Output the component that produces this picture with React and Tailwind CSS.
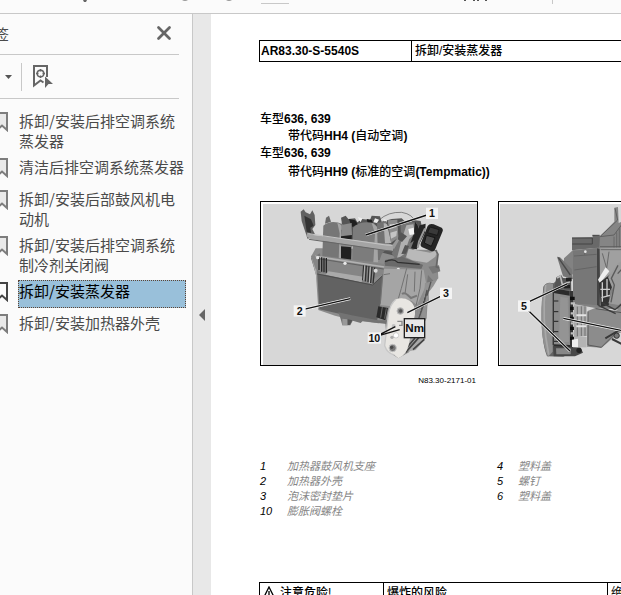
import { X } from "lucide-react";

const bookmarks = [
  { id: 1, title: "拆卸/安装后排空调系统蒸发器" },
  { id: 2, title: "清洁后排空调系统蒸发器" },
  { id: 3, title: "拆卸/安装后部鼓风机电动机" },
  { id: 4, title: "拆卸/安装后排空调系统制冷剂关闭阀" },
  { id: 5, title: "拆卸/安装蒸发器", selected: true },
  { id: 6, title: "拆卸/安装加热器外壳" },
];

const legendLeft = [
  ["1", "加热器鼓风机支座"],
  ["2", "加热器外壳"],
  ["3", "泡沫密封垫片"],
  ["10", "膨胀阀螺栓"],
];

const legendRight = [
  ["4", "塑料盖"],
  ["5", "螺钉"],
  ["6", "塑料盖"],
];

function BookmarkIcon({ selected }) {
  return (
    <svg width="12" height="20" viewBox="0 0 12 20" className="shrink-0" aria-hidden="true">
      <path d="M1 1H11V18L6 13.500L1 18Z" fill={selected ? "#fbfbfb" : "#e9e9e9"} stroke={selected ? "#444" : "#7d7d7d"} strokeWidth="2" />
    </svg>
  );
}

function FindBookmarkIcon() {
  return (
    <svg width="20" height="23" viewBox="0 0 20 23" fill="none" stroke="#666" aria-hidden="true">
      <path d="M10.500 17.500L7.500 15.500L1 20.500V1H14V12" strokeWidth="2" />
      <circle cx="7.500" cy="8.500" r="3.300" strokeWidth="1.500" />
      <path d="M7.500 4V6.500M7.500 10.500V13M3 8.500H5.500M9.500 8.500H12" strokeWidth="1.500" />
      <path d="M12 11.500L20 19L15.500 19L12 23Z" fill="#666" stroke="none" />
    </svg>
  );
}

function Callout({ x, y, w = 36, children }) {
  return (
    <>
      <rect x={x - w / 2} y={y - 17} width={w} height="34" fill="#f4f4f4" />
      <text x={x} y={y + 11} textAnchor="middle" fontSize="32" fontWeight="bold" fill="#111">{children}</text>
    </>
  );
}

// Heater housing, front view
function HousingDrawing() {
  return (
    <svg width="214" height="161" viewBox="24 27 642 483" preserveAspectRatio="none" role="img" aria-label="N83.30-2171-01">
      <rect x="24" y="27" width="642" height="483" fill="#d7d7d7" />

      {/* hose and rear parts */}
      <path d="M372 75Q400 50 440 52Q475 58 480 82" fill="none" stroke="#555" strokeWidth="2" />
      <path d="M168 185L182 160L200 160L545 165L550 250L520 285L515 370L462 472L430 490L400 470L390 380L370 385L292 375L240 362L190 345L183 240Z" fill="#8c8c8c" />
      <path d="M168 190L195 175L200 232L184 240Z" fill="#747474" />
      <path d="M183 180L170 190L185 250L192 345L186 260Z" fill="#aaa" />

      {/* bracket arm on the left */}
      <path d="M137 50L146 43L152 52L165 58L172 46L179 60L181 90L172 102L180 118L158 132L140 78Z" fill="#616161" />
      <path d="M148 62L168 73L176 92L166 98L168 114L155 110Z" fill="#333" />

      {/* top mechanism */}
      <path d="M260 80L258 68L272 62L280 72L300 70L307 82L322 72L345 75L350 62L375 64L380 80L410 72L440 70L458 88L475 75L497 78L500 92L485 160L430 185L290 150L262 110Z" fill="#555" />
      <path d="M282 72L300 76L310 90L290 96ZM335 72L350 74L356 90L340 92Z" fill="#1f1f1f" />
      <path d="M308 66L322 70L317 82ZM360 70L372 74L366 84L355 82ZM385 72L396 76L392 88Z" fill="#ededed" />
      <path d="M213 68L222 62L228 80L210 86Z" fill="#686868" />

      {/* blower halves */}
      <path d="M205 92Q228 72 264 88L257 192L202 184Z" fill="#767676" />
      <path d="M247 83Q264 89 266 110L262 195L251 193L254 115Z" fill="#a6a6a6" />
      <path d="M258 105L291 94L288 203L258 196Z" fill="#202020" />
      <path d="M259 90L290 84L291 120L258 124Z" fill="#8a8a8a" />
      <path d="M256 140L292 145L291 157L257 154Z" fill="#8b8b8b" />
      <path d="M294 98Q315 76 357 84L363 105L357 200L292 200Z" fill="#7c7c7c" />
      <path d="M350 84Q370 91 373 112L369 202L355 202L360 116Z" fill="#a5a5a5" />
      <path d="M366 84L393 78L404 150L380 178L374 195L369 195Z" fill="#727272" />
      <path d="M386 85Q399 84 398 96L409 144L390 145Z" fill="#b3b3b3" />
      <path d="M398 76L427 74L430 128L408 143Z" fill="#8c8c8c" />
      <path d="M404 88L425 86L424 96L404 103ZM406 113L426 107L424 123L408 131Z" fill="#c4c4c4" />

      {/* main crossbar */}
      <path d="M157 113L174 120L390 146L407 148L418 154L414 168L390 166L166 132L154 124Z" fill="#a4a4a4" />
      <path d="M160 116L392 150L414 151" fill="none" stroke="#c5c5c5" strokeWidth="3" />
      <path d="M162 133L390 166L413 169" fill="none" stroke="#666" strokeWidth="3" />
      <path d="M412 150L428 128L436 134L418 166Z" fill="#999" />

      {/* right linkage and gears */}
      <path d="M436 78L484 83L496 105L464 180L427 202L410 175L438 125Z" fill="#757575" />
      <path d="M454 91L475 88L480 114L463 132L447 178L425 193L440 135Z" fill="#b0b0b0" />
      <path d="M480 80Q498 97 488 128L466 145L476 118Z" fill="#252525" />
      <path d="M460 102L476 98L478 118L464 120Z" fill="#f4f4f4" />
      <path d="M438 112L428 133L441 141L456 124ZM450 150L462 153L453 176L439 177Z" fill="#555" />
      <path d="M494 91L512 86L510 113L485 163L468 160Z" fill="#252525" />
      <path d="M518 93Q524 84 536 88L560 98Q566 103 562 111L541 162Q537 173 526 167L502 157Q494 152 498 143Z" fill="#242424" />
      <path d="M525 96L552 104L547 121L518 113Z" fill="#393939" stroke="#111" strokeWidth="2" />
      <path d="M514 121L540 128L529 154L508 144Z" fill="#4a4a4a" stroke="#151515" strokeWidth="3" />
      <path d="M510 100L492 140L488 158" fill="none" stroke="#999" strokeWidth="6" />

      {/* right shelf and side */}
      <path d="M461 161L525 173L548 165L541 185L516 203L472 196L453 187Z" fill="#b9b9b9" />
      <path d="M390 195L440 185L490 204L510 212L505 222L388 212Z" fill="#6a6a6a" />
      <path d="M390 200Q415 188 428 202L494 208" fill="none" stroke="#303030" strokeWidth="4" />
      <path d="M505 208L540 195L545 250L513 270L512 370L475 350L466 300Z" fill="#8c8c8c" />
      <path d="M520 215L552 211L556 229L533 236ZM519 240L535 257L528 277L515 271Z" fill="#777" />
      <path d="M542 165L549 178L544 215L552 219" fill="none" stroke="#666" strokeWidth="5" />

      {/* rail below blower */}
      <path d="M168 182L214 184L390 207L387 237L352 252L343 268L205 235L182 222Z" fill="#858585" />
      <path d="M182 184L388 216" stroke="#b2b2b2" strokeWidth="5" />
      <path d="M183 190L386 222" stroke="#505050" strokeWidth="2" />
      <path d="M220 229L325 245L320 262L212 239Z" fill="#aaa" />
      <path d="M192 186V225M200 187V230M207 188V232M214 189V233" stroke="#242424" strokeWidth="4" />
      <path d="M326 211L323 256M334 212L331 259M342 214L339 262M351 216L347 264M359 218L354 266" stroke="#303030" strokeWidth="4" />
      <path d="M329 211L326 256M346 215L343 264" stroke="#d2d2d2" strokeWidth="2" />
      <circle cx="188" cy="188" r="5" fill="#e5e5e5" />
      <circle cx="270" cy="205" r="5" fill="#e9e9e9" />
      <circle cx="362" cy="227" r="6" fill="#d9d9d9" />
      <circle cx="430" cy="223" r="5" fill="#e9e9e9" />

      {/* housing body */}
      <path d="M187 237L211 240L353 269L383 241L376 325L366 379L283 363L193 343Z" fill="#626262" />
      <path d="M187 237L353 270L383 242" fill="none" stroke="#4c4c4c" strokeWidth="3" />
      <path d="M387 221L506 224L514 270L486 330L470 318L446 311L423 315L407 334L377 330Z" fill="#a5a5a5" />
      <path d="M383 238L376 326M386 239L405 236M455 220L439 280L430 311M458 238L450 296M480 230L478 290M500 226L495 280L483 332" fill="none" stroke="#727272" strokeWidth="3" />
      <path d="M441 297Q448 292 458 300L468 309L486 302" fill="none" stroke="#777" strokeWidth="6" />
      <path d="M370 334L399 339L391 376L364 367Z" fill="#292929" />
      <path d="M382 336L377 368M394 340L389 371" stroke="#8a8a8a" strokeWidth="2" />
      <path d="M250 352L290 361L370 376L396 376L395 387L362 383L323 378L317 384L293 377L286 391L262 391L257 372Z" fill="#737373" />
      <path d="M262 371L277 373L278 391L262 391Z" fill="#999" />
      <path d="M278 373L292 376L284 390L278 390Z" fill="#555" />
      <path d="M510 264L546 255L535 274L521 292L522 316L513 340L512 369L500 372Z" fill="#929292" />
      <path d="M516 285L508 323L491 371M528 260L516 302" stroke="#565656" strokeWidth="4" />

      {/* expansion valve flange */}
      <path d="M462 425L513 430L482 465L455 470Z" fill="#a8a8a8" />
      <path d="M492 427L452 472M480 429L456 457M508 433L474 464" stroke="#444" strokeWidth="5" />
      <path d="M423 313Q443 305 464 317Q482 329 480 358L461 450Q454 480 430 490L418 480Q397 475 389 452L400 360Q405 327 423 313Z" fill="#e8e6e2" />
      <path d="M423 313Q405 327 400 360L389 452Q397 475 418 480" fill="none" stroke="#c7c7c7" strokeWidth="4" />
      <circle cx="436" cy="348" r="10" fill="#888" stroke="#bbb" strokeWidth="3" />
      <circle cx="437" cy="348" r="5" fill="#555" />
      <circle cx="413" cy="459" r="11" fill="#777" stroke="#c5c5c5" strokeWidth="3" />
      <circle cx="410" cy="457" r="5" fill="#484848" />
      <circle cx="416" cy="393" r="6" fill="#c2c2c2" />
      <circle cx="423" cy="421" r="8" fill="#fff" stroke="#b9b9b9" strokeWidth="2" />
      <circle cx="411" cy="427" r="5" fill="#aaa" />
      <path d="M427 379H441V391H432" fill="none" stroke="#888" strokeWidth="4" />

      {/* callouts */}
      <path d="M513 61L332 120M146 343L286 311M561 302L457 353" stroke="#f4f4f4" strokeWidth="8" />
      <path d="M516 60L332 120M146 343L286 311M561 302L457 353M374 419L421 395M374 421L434 404" stroke="#111" strokeWidth="4" />
      <Callout x={531} y={55}>1</Callout>
      <Callout x={134} y={348}>2</Callout>
      <Callout x={573} y={295}>3</Callout>
      <Callout x={358} y={429} w={40}>10</Callout>
      <rect x="448" y="371" width="61" height="57" fill="#e8e8e8" stroke="#222" strokeWidth="4" />
      <text x="479" y="411" textAnchor="middle" fontSize="35" fontWeight="bold" fill="#111">Nm</text>
    </svg>
  );
}

// Heater housing, side view
function SideDrawing() {
  return (
    <svg width="214" height="161" viewBox="30 27 642 483" preserveAspectRatio="none" aria-hidden="true">
      <rect x="30" y="27" width="642" height="483" fill="#d7d7d7" />

      {/* top funnel */}
      <path d="M373 38L384 36L386 84L420 70V190L322 180L328 125L373 80Z" fill="#858585" />
      <path d="M375 40L383 75L330 125L372 120L398 85V155H330" fill="none" stroke="#606060" strokeWidth="3" />
      <path d="M372 125V158M380 112V158M388 100V158" stroke="#5a5a5a" strokeWidth="2" />
      <path d="M246 128L307 127L309 120L330 122L328 158L246 166Z" fill="#696969" />
      <path d="M246 129H307V147H247M307 121H329" fill="none" stroke="#444" strokeWidth="3" />

      {/* upper housing */}
      <path d="M222 190L249 165L320 158L420 158V345L320 340L249 327V239L220 223Z" fill="#828282" />
      <path d="M249 168L321 160L325 331L249 325Z" fill="#777" />
      <path d="M321 160L333 163L329 331H321Z" fill="#444" />
      <path d="M329 160L420 158V200L376 218L360 247L330 270Z" fill="#a0a0a0" />
      <path d="M332 164H420M337 175L350 220M357 170L350 220L330 265" fill="none" stroke="#696969" strokeWidth="3" />
      <path d="M252 183L320 178M253 225L320 215M284 166V179" stroke="#5b5b5b" strokeWidth="2" />
      <path d="M201 185L210 187L245 222L249 253L219 244Z" fill="#777" />
      <path d="M205 188L241 240" stroke="#494949" strokeWidth="4" />
      <circle cx="286" cy="170" r="4" fill="#e6e6e6" />
      <path d="M324 254L347 217L358 229L330 265Z" fill="#eee" />

      {/* linkage */}
      <path d="M327 264L365 235L374 260L360 288L357 329L333 337Z" fill="#333" />
      <path d="M337 262V320M351 252V305M331 283H360M334 308L360 301" stroke="#ccc" strokeWidth="4" />
      <path d="M354 246L384 204L420 187V302L385 330L355 325L369 285Z" fill="#9c9c9c" />
      <path d="M384 211L364 250L373 270L363 322M420 196L383 236" fill="none" stroke="#5b5b5b" strokeWidth="4" />

      {/* fan cover */}
      <path d="M160 275Q170 258 190 265L211 249L243 252L249 470L220 485L171 484Q153 440 155 340Z" fill="#646464" />
      <path d="M164 271Q174 260 189 267L188 470L174 486Q149 430 155 321Z" fill="#919191" />
      <path d="M167 270Q154 370 176 479" fill="none" stroke="#a8a8a8" strokeWidth="5" />
      <path d="M188 279L239 287L240 457L191 451Z" fill="#8a8a8a" />
      <path d="M211 305L233 309L237 440L207 444Z" fill="#949494" />
      <path d="M190 318H205M190 350H205M190 379H205M190 410H205M190 439H205" stroke="#222" strokeWidth="3" />
      <path d="M191 280L239 288V302L191 294ZM191 448L240 450V460L191 458Z" fill="#2c2c2c" />
      <path d="M190 286V450" stroke="#373737" strokeWidth="4" />
      <path d="M199 247L213 239L219 249L243 251V285L193 279Z" fill="#555" />
      <path d="M201 249L211 243L217 269L240 260" fill="none" stroke="#bbb" strokeWidth="5" />
      <path d="M228 248H245V259H228ZM222 270H240V280H222Z" fill="#202020" />

      {/* clips along the seam */}
      <path d="M240 288H249V459H240Z" fill="#353535" />
      <path d="M240 310H254M240 340H254M240 370H254M240 400H254M240 430H254" stroke="#101010" strokeWidth="10" />
      <path d="M242 325H255M242 355H255M242 385H255M242 415H255" stroke="#bdbdbd" strokeWidth="7" />
      <path d="M251 330L290 334L291 423L252 427Z" fill="#aaa" />
      <path d="M262 335V424M274 334V423M285 334V423" stroke="#707070" strokeWidth="3" />
      <path d="M259 361H289M259 394H289" stroke="#e4e4e4" strokeWidth="6" />

      {/* lower duct */}
      <path d="M293 348L317 338L377 348L420 313V400L383 417L335 458L291 455Z" fill="#8c8c8c" />
      <path d="M317 341L420 357M294 350V450L334 457L380 411L420 402" fill="none" stroke="#5a5a5a" strokeWidth="3" />
      <path d="M335 323L375 344L420 306M325 331L377 356" fill="none" stroke="#3c3c3c" strokeWidth="4" />
      <path d="M346 430L388 405L420 419M366 432L420 460" fill="none" stroke="#393939" strokeWidth="6" />
      <circle cx="380" cy="422" r="8" fill="#777" stroke="#333" strokeWidth="3" />
      <path d="M252 426H290V457H252Z" fill="#b4b4b4" />
      <path d="M246 434L264 431V456H246Z" fill="#eee" />
      <path d="M189 453L272 458L279 473L255 484L191 484Z" fill="#484848" />
      <path d="M198 460H242V478H199Z" fill="#888" />
      <circle cx="267" cy="466" r="8" fill="#222" />

      {/* callouts */}
      <path d="M111 323L233 266M111 343L240 468M220 370L420 412" stroke="#f3f3f3" strokeWidth="8" />
      <path d="M111 323L233 266M111 343L240 468M220 370L420 412" stroke="#111" strokeWidth="4" />
      <Callout x={102} y={333}>5</Callout>
    </svg>
  );
}

function Legend({ items, termClass }) {
  return (
    <dl>
      {items.map(([num, name]) => (
        <div key={num} className="flex">
          <dt className={`${termClass} shrink-0 text-black`}>{num}</dt>
          <dd className="text-[#858585]">{name}</dd>
        </div>
      ))}
    </dl>
  );
}

export default function App() {
  return (
    <div className="flex h-screen flex-col overflow-hidden bg-white font-['Liberation_Sans','Noto_Sans_CJK_SC',sans-serif]">
      {/* Lower edge of the viewer toolbar */}
      <header className="flex h-3.5 shrink-0 items-start border-b border-[#c8c8c8] bg-[#fbfbfb]">
        <svg width="238" height="4" viewBox="0 0 238 4" className="shrink-0" aria-hidden="true">
          <path d="M83 0H87L86 2H84Z" fill="#666" />
          <path d="M182 0H188Q185 2 182 0ZM226 0H232Q229 2 226 0Z" fill="#999" />
        </svg>
        <span className="ml-[23px] h-1 w-7 border-b border-[#c8c8c8]" />
        <svg width="28" height="4" viewBox="0 0 28 4" className="ml-[174px] shrink-0" aria-hidden="true">
          <path d="M1 0H3V1H1ZM10 0H12V1H10ZM14 0H16V1H14ZM22 0H24V1H22Z" fill="#555" />
        </svg>
        <span className="ml-[61px] h-1 border-l border-[#c8c8c8]" />
      </header>

      <div className="flex min-h-0 flex-1">
        {/* Bookmarks panel */}
        <aside className="w-[193px] shrink-0 border-r border-[#c8c8c8] bg-[#fbfbfb] font-['Noto_Sans_CJK_SC',sans-serif] text-[15px] text-[#4a4a4a]">
          <div className="mr-[13px] flex h-[41px] items-center justify-between border-b border-[#c8c8c8] pr-1">
            <h2 className="-ml-1.5 leading-5">签</h2>
            <button type="button" aria-label="关闭" className="pb-0.5 text-[#666]">
              <X size={22} strokeWidth={3} />
            </button>
          </div>
          <div className="mr-[13px] flex h-11 items-center border-b border-[#c8c8c8]">
            <button type="button" aria-label="选项" className="pl-[5px]">
              <svg width="7" height="4" viewBox="0 0 7 4" aria-hidden="true">
                <path d="M0 0H7L3.500 4Z" fill="#555" />
              </svg>
            </button>
            <span className="ml-[9px] h-7 border-l border-[#c8c8c8]" />
            <button type="button" aria-label="查找书签" className="ml-[11px]">
              <FindBookmarkIcon />
            </button>
          </div>
          <ul className="-ml-1 pt-[11px] pr-1.5">
            {bookmarks.map((b) => (
              <li key={b.id} className="flex min-h-8 items-start gap-2.5 pb-0.5">
                <span className="pt-0.5">
                  <BookmarkIcon selected={b.selected} />
                </span>
                <a
                  href="#"
                  className={`min-h-7 flex-1 border pb-0.5 leading-5 break-all ${
                    b.selected ? "border-dotted border-[#5d4434] bg-[#99c0da] text-black" : "border-transparent"
                  }`}
                >
                  {b.title}
                </a>
              </li>
            ))}
          </ul>
        </aside>

        <button type="button" aria-label="折叠" className="flex w-[18px] shrink-0 items-center justify-center bg-[#e8e8e8] pt-5">
          <svg width="6" height="12" viewBox="0 0 6 12" aria-hidden="true">
            <path d="M6 0V12L0 6Z" fill="#666" />
          </svg>
        </button>

        {/* Document page */}
        <main className="min-w-0 flex-1 overflow-hidden bg-white pt-[26px] pl-12 text-xs text-black">
          <table className="h-[22px] w-full table-fixed border-collapse border border-r-0 border-black">
            <tbody>
              <tr>
                <th className="w-[152px] border-r border-black pl-px text-left leading-5 font-bold">AR83.30-S-5540S</th>
                <td className="pl-[3px] leading-5 font-medium">拆卸/安装蒸发器</td>
              </tr>
            </tbody>
          </table>

          <section className="mt-[49px] pl-px leading-[17px] font-bold whitespace-nowrap">
            <p><span className="font-medium">车型</span>636, 639</p>
            <p className="pl-7"><span className="font-medium">带代码</span>HH4 (<span className="font-medium">自动空调</span>)</p>
            <p><span className="font-medium">车型</span>636, 639</p>
            <p className="pt-0.5 pl-7"><span className="font-medium">带代码</span>HH9 (<span className="font-medium">标准的空调</span>(Tempmatic))</p>
          </section>

          <section className="mt-5 flex gap-5 pl-px">
            <figure className="shrink-0">
              <div className="border border-black pt-0.5 pl-0.5">
                <HousingDrawing />
              </div>
              <figcaption className="mt-[9px] pr-0.5 text-right text-[8px] leading-3">N83.30-2171-01</figcaption>
            </figure>
            <figure className="shrink-0">
              <div className="border border-black pt-0.5 pl-px">
                <SideDrawing />
              </div>
            </figure>
          </section>

          <section className="mt-[72px] grid grid-cols-[237px_1fr] pl-px text-[11px] leading-[15px] whitespace-nowrap italic">
            <Legend items={legendLeft} termClass="w-[27px]" />
            <Legend items={legendRight} termClass="w-[21px]" />
          </section>

          <table className="mt-[63px] w-full table-fixed border-collapse border border-r-0 border-black">
            <tbody>
              <tr className="leading-5 whitespace-nowrap">
                <th className="w-[124px] border-r border-black text-left font-medium">
                  <span className="flex items-center gap-1 pl-0.5">
                    <svg width="14" height="14" viewBox="0 0 14 14" fill="none" stroke="#000" aria-hidden="true">
                      <path d="M7 1L13 13H1Z" strokeWidth="1.300" />
                      <path d="M7 5V9M7 10.500V12" strokeWidth="1.300" />
                    </svg>
                    注意危险!
                  </span>
                </th>
                <td className="w-[224px] border-r border-black pl-[3px] font-medium">爆炸的风险.</td>
                <td className="overflow-hidden pl-[3px]">绝</td>
              </tr>
            </tbody>
          </table>
        </main>
      </div>
    </div>
  );
}
